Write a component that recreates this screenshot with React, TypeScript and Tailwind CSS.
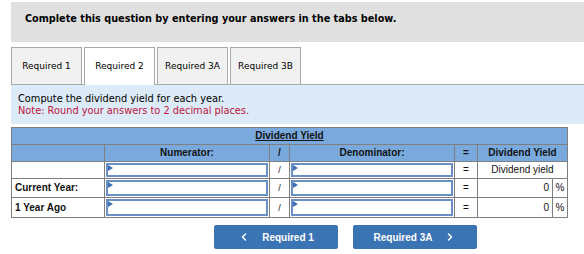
import { ChevronLeft, ChevronRight } from 'lucide-react'

const verdana = { fontFamily: '"DejaVu Sans", Verdana, sans-serif' }
const arial = { fontFamily: '"Liberation Sans", Arial, sans-serif' }

function Tab({ label, active }: { label: string; active?: boolean }) {
  return (
    <div
      className={
        'w-[71px] flex justify-center pt-[12px] text-[9px] text-black border border-[#a9a9a9] border-b-0 ' +
        (active ? 'h-[38px] bg-white -mb-[1px]' : 'h-[37px] bg-[#f1f1f1]')
      }
    >
      {label}
    </div>
  )
}

function Field({ h }: { h: string }) {
  return (
    <div className={'relative border-2 border-[#6a8fc4] bg-white ' + h}>
      <span className="absolute left-0 top-0 w-0 h-0 border-t-[3px] border-b-[3px] border-l-[5px] border-t-transparent border-b-transparent border-l-[#3d6fb5]" />
    </div>
  )
}

export default function App() {
  const cell = 'border border-[#7f7f7f] p-0 leading-[14px]'
  const rows = [
    { label: '', h: 'h-[14px]', result: 'Dividend yield' },
    { label: 'Current Year:', h: 'h-[16px]', result: '0' },
    { label: '1 Year Ago', h: 'h-[17px]', result: '0' },
  ]

  return (
    <div className="w-[584px] h-[254px] bg-white pl-[11px] pt-[2px]" style={verdana}>
      <div className="h-[40px] bg-[#e0e0e0] pl-[14px] pt-[10px] text-[9.7px] font-bold text-black">
        Complete this question by entering your answers in the tabs below.
      </div>

      <div className="relative z-10 flex gap-[2px] mt-[5px] items-start">
        <Tab label="Required 1" />
        <Tab label="Required 2" active />
        <Tab label="Required 3A" />
        <Tab label="Required 3B" />
      </div>

      <div className="border-t border-[#a9a9a9] bg-[#dcebf7] h-[40px] pl-[7px] pt-[8px] text-[9.8px] leading-[12px]">
        <div className="text-black">Compute the dividend yield for each year.</div>
        <div className="text-[#c0143c]">Note: Round your answers to 2 decimal places.</div>
      </div>

      <table className="mt-[3px] border-collapse table-fixed text-[10px] text-[#111]" style={arial}>
        <colgroup>
          <col className="w-[93px]" />
          <col className="w-[165px]" />
          <col className="w-[20px]" />
          <col className="w-[165px]" />
          <col className="w-[23px]" />
          <col className="w-[75px]" />
          <col className="w-[15px]" />
        </colgroup>
        <tbody>
          <tr className="h-[17px] bg-[#7aaadd]">
            <td colSpan={7} className={cell + ' text-center font-bold underline'}>
              Dividend Yield
            </td>
          </tr>
          <tr className="h-[17px] bg-[#7aaadd] font-bold">
            <td className={cell}></td>
            <td className={cell + ' text-center'}>Numerator:</td>
            <td className={cell + ' text-center'}>/</td>
            <td className={cell + ' text-center'}>Denominator:</td>
            <td className={cell + ' text-center'}>=</td>
            <td colSpan={2} className={cell + ' text-center'}>
              Dividend Yield
            </td>
          </tr>
          {rows.map((r, i) => (
            <tr key={i} className="bg-white">
              <td className={cell + ' pl-[3px] font-bold'}>{r.label}</td>
              <td className={cell + ' p-[1px]'}>
                <Field h={r.h} />
              </td>
              <td className={cell + ' text-center text-[9px]'}>/</td>
              <td className={cell + ' p-[1px]'}>
                <Field h={r.h} />
              </td>
              <td className={cell + ' text-center'}>=</td>
              {i === 0 ? (
                <td colSpan={2} className={cell + ' text-center'}>
                  {r.result}
                </td>
              ) : (
                <>
                  <td className={cell + ' text-right pr-[3px]'}>{r.result}</td>
                  <td className={cell + ' text-center'}>%</td>
                </>
              )}
            </tr>
          ))}
        </tbody>
      </table>

      <div className="flex gap-[15px] mt-[7px] ml-[203px] text-[10px] font-bold text-white" style={arial}>
        <button className="w-[124px] h-[24px] bg-[#3b74b5] rounded-[2px] flex items-center justify-center gap-[12px]">
          <ChevronLeft size={12} strokeWidth={3} />
          <span>Required 1</span>
        </button>
        <button className="w-[124px] h-[24px] bg-[#3b74b5] rounded-[2px] flex items-center justify-center gap-[12px]">
          <span>Required 3A</span>
          <ChevronRight size={12} strokeWidth={3} />
        </button>
      </div>
    </div>
  )
}
